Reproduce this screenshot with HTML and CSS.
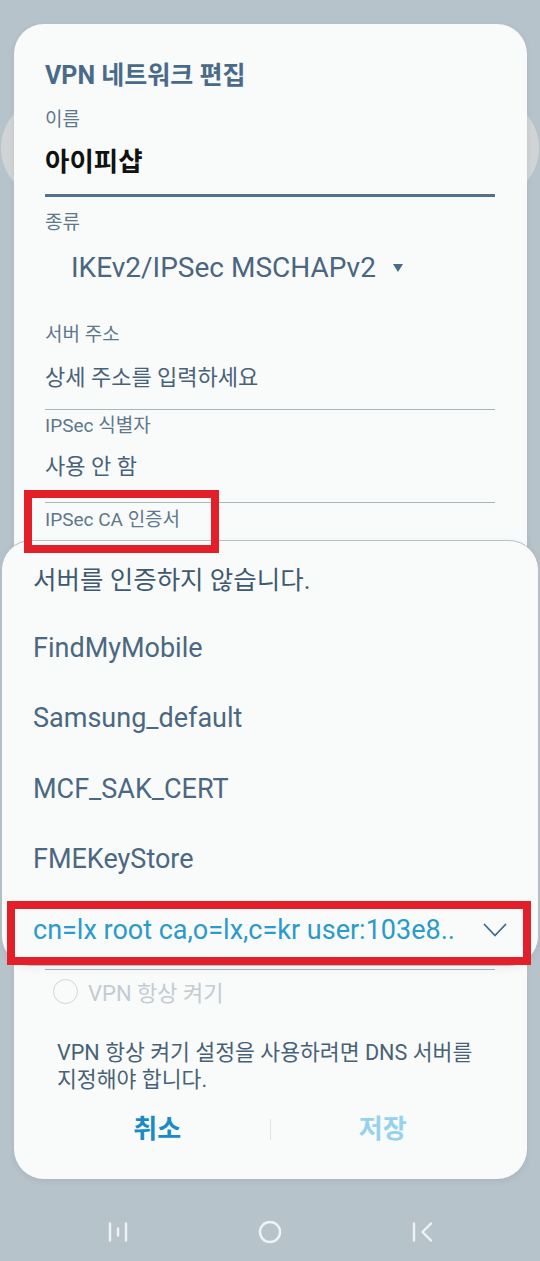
FILE: index.html
```html
<!DOCTYPE html>
<html lang="ko">
<head>
    <meta charset="UTF-8">
    <meta name="viewport" content="width=device-width, initial-scale=1.0">
    <title>VPN 네트워크 편집</title>
    <link rel="stylesheet" href="styles.css">
</head>
<body>
    <div class="screen">
        <div class="backdrop-pill"></div>

        <div class="dialog">
            <h2 class="dialog-title">VPN 네트워크 편집</h2>

            <div class="field field-name">
                <div class="label">이름</div>
                <div class="name-input">아이피샵</div>
            </div>

            <div class="field field-type">
                <div class="label">종류</div>
                <div class="select">IKEv2/IPSec MSCHAPv2<span class="caret"></span></div>
            </div>

            <div class="field field-server">
                <div class="label">서버 주소</div>
                <div class="value">상세 주소를 입력하세요</div>
            </div>

            <div class="field field-id">
                <div class="label">IPSec 식별자</div>
                <div class="value">사용 안 함</div>
            </div>

            <div class="field field-ca">
                <div class="label">IPSec CA 인증서</div>
                <!-- 인증서 목록 팝업 뒤에 가려지는 부분 -->
                <div class="covered"></div>
            </div>

            <label class="always-on">
                <span class="radio"></span>
                VPN 항상 켜기
            </label>

            <p class="note">VPN 항상 켜기 설정을 사용하려면 DNS 서버를 지정해야 합니다.</p>

            <div class="actions">
                <button class="action action-cancel">취소</button>
                <span class="action-divider"></span>
                <button class="action action-save">저장</button>
            </div>
        </div>

        <nav class="navbar">
            <span class="nav-btn">
                <svg width="22" height="20" viewBox="0 0 22 20">
                    <path d="M3 1.5v17M19 1.5v17M11 6.5v7" stroke="#eef2f5" stroke-width="2.4" fill="none" stroke-linecap="round"/>
                </svg>
            </span>
            <span class="nav-btn">
                <svg width="24" height="24" viewBox="0 0 24 24">
                    <circle cx="12" cy="12" r="10" stroke="#eef2f5" stroke-width="2.4" fill="none"/>
                </svg>
            </span>
            <span class="nav-btn">
                <svg width="22" height="20" viewBox="0 0 22 20">
                    <path d="M3 1.5v17M20 1.5l-8.5 8.5 8.5 8.5" stroke="#eef2f5" stroke-width="2.4" fill="none" stroke-linecap="round" stroke-linejoin="round"/>
                </svg>
            </span>
        </nav>

        <div class="cert-menu">
            <ul class="cert-list">
                <li class="cert-item cert-none">서버를 인증하지 않습니다.</li>
                <li class="cert-item">FindMyMobile</li>
                <li class="cert-item">Samsung_default</li>
                <li class="cert-item">MCF_SAK_CERT</li>
                <li class="cert-item">FMEKeyStore</li>
                <li class="cert-item selected">
                    <span>cn=lx root ca,o=lx,c=kr user:103e8..</span>
                    <svg class="check" width="24" height="14" viewBox="0 0 24 14">
                        <path d="M1.5 1.5l10.5 11L22.5 1.5" stroke="#3c6a8b" stroke-width="1.8" fill="none" stroke-linecap="round" stroke-linejoin="round"/>
                    </svg>
                </li>
            </ul>
        </div>

        <div class="mark mark-ca"></div>
        <div class="mark mark-cert"></div>
    </div>
</body>
</html>
```

FILE: styles.css
```css
* {
    box-sizing: border-box;
}
body {
    margin: 0;
    background: #b7c3cb;
    font-family: Roboto, "Noto Sans CJK KR", sans-serif;
}
.screen {
    position: relative;
    width: 540px;
    height: 1261px;
    overflow: hidden;
    background: #b7c3cb;
}
.backdrop-pill {
    position: absolute;
    left: 1px;
    top: 97px;
    width: 538px;
    height: 102px;
    border-radius: 51px;
    background: #d1d4d6;
}

/* 대화상자 */
.dialog {
    position: relative;
    margin: 24px 13px 0 14px;
    padding: 36px 32px 26px 31px;
    background: #f9fafa;
    border-radius: 30px;
    box-shadow: 0 2px 6px rgba(0,0,0,0.08);
}
.dialog-title {
    margin: 0;
    font-size: 25px;
    line-height: 32px;
    font-weight: 700;
    color: #4a6b88;
}
.label {
    font-size: 19px;
    line-height: 24px;
    color: #5e788b;
}
.value {
    font-size: 22px;
    line-height: 28px;
    color: #486279;
    border-bottom: 1px solid #aab6bf;
}
.field-name .label {
    margin-top: 16px;
}
.name-input {
    margin-top: 12px;
    padding-bottom: 14px;
    font-size: 26.5px;
    line-height: 36px;
    font-weight: 700;
    color: #111;
    border-bottom: 3px solid #54718a;
}
.field-type .label {
    margin-top: 14px;
}
.select {
    display: flex;
    align-items: center;
    margin-top: 17px;
    padding-left: 26px;
    font-size: 28px;
    line-height: 32px;
    color: #4a6680;
}
.caret {
    margin-left: 17px;
    width: 0;
    height: 0;
    border-left: 5.5px solid transparent;
    border-right: 5.5px solid transparent;
    border-top: 8px solid #4a6a86;
}
.field-server .label {
    margin-top: 39px;
}
.field-server .value {
    margin-top: 17px;
    padding-bottom: 17px;
}
.field-id .label {
    margin-top: 4px;
}
.field-id .value {
    margin-top: 15px;
    padding-bottom: 21px;
}
.field-ca > .label {
    margin-top: 5px;
}
.covered {
    height: 438px;
    border-bottom: 1px solid #aab6bf;
}

.always-on {
    display: flex;
    align-items: center;
    gap: 10px;
    height: 26px;
    margin-top: 8px;
    padding-left: 8px;
    font-size: 22px;
    color: #c3ccd2;
}
.radio {
    width: 25px;
    height: 25px;
    border: 1.5px solid #cfd6db;
    border-radius: 50%;
}
.note {
    margin: 35px 0 0;
    padding-left: 12px;
    font-size: 21.6px;
    line-height: 27px;
    color: #476276;
    word-break: keep-all;
}
.actions {
    display: flex;
    align-items: center;
    height: 48px;
    margin-top: 12px;
}
.action {
    flex: 1;
    border: none;
    background: none;
    padding: 0;
    font-family: inherit;
    font-size: 26px;
    font-weight: 700;
    line-height: 48px;
}
.action-cancel {
    color: #1a8cc5;
}
.action-save {
    color: #94d2ee;
}
.action-divider {
    width: 1px;
    height: 21px;
    background: #dde3e7;
}

/* 하단 내비게이션 */
.navbar {
    display: flex;
    justify-content: center;
    align-items: center;
    gap: 112px;
    height: 26px;
    margin-top: 40px;
}
.nav-btn {
    display: flex;
    justify-content: center;
    width: 40px;
}

/* 인증서 선택 팝업 */
.cert-menu {
    position: absolute;
    left: 1px;
    top: 540px;
    width: 538px;
    height: 426px;
    background: #f9fafa;
    border: 1px solid #b6c1c9;
    border-radius: 30px;
    box-shadow: 0 2px 8px rgba(0,0,0,0.06);
}
.cert-list {
    list-style: none;
    margin: 0;
    padding: 1px 0 0;
}
.cert-item {
    display: flex;
    align-items: center;
    justify-content: space-between;
    height: 70.5px;
    padding: 0 31px 0 31px;
    font-size: 27px;
    color: #4b6882;
}
.cert-none {
    font-size: 25.5px;
    color: #3f5a70;
}
.cert-item.selected {
    color: #2a9bca;
}

/* 빨간 강조 표시 */
.mark {
    position: absolute;
    border: 8px solid #e3202a;
}
.mark-ca {
    left: 24px;
    top: 490px;
    width: 195px;
    height: 63px;
}
.mark-cert {
    left: 7px;
    top: 901px;
    width: 524px;
    height: 64px;
}
```
